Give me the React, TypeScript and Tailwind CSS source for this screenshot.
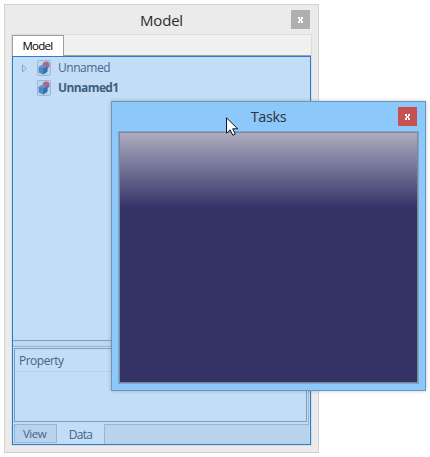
import React from "react";

function CloseButton({ className }: { className: string }) {
  return (
    <button className={`flex h-[19px] w-[19px] shrink-0 items-center justify-center ${className}`} aria-label="Close">
      <svg width="5" height="6" viewBox="0 0 5 6" fill="white" shapeRendering="crispEdges">
        <path d="M0 0h2v1H0zM3 0h2v1H3zM0 1h2v1H0zM3 1h2v1H3zM1 2h3v2H1zM0 4h2v2H0zM3 4h2v2H3z" />
      </svg>
    </button>
  );
}

function DocumentIcon() {
  return (
    <svg width="14" height="16" viewBox="0 0 14 16" className="shrink-0">
      <rect x="0.5" y="0.5" width="13" height="15" rx="0.8" fill="#b9d5f0" stroke="#9bb7d6" />
      <circle cx="9.2" cy="5" r="3.4" fill="#b56480" />
      <path d="M1.6 7 5.5 4.8 10.4 6.3v5.5l-4.2 2.7L1.6 12.4z" fill="#5088c4" />
      <path d="M1.6 7 5.5 4.8 10.4 6.3 6.4 8.5z" fill="#6094cc" />
      <path d="M6.4 8.5 10.4 6.3v5.5l-4.2 2.7z" fill="#3c70aa" />
    </svg>
  );
}

function TreeItem({ label, expandable, bold }: { label: string; expandable?: boolean; bold?: boolean }) {
  return (
    <div className="flex h-5 items-center pl-[8px]">
      <div className="w-4 shrink-0">
        {expandable && (
          <svg width="7" height="9" viewBox="0 0 7 9" fill="none" stroke="#88a7ca">
            <path d="M1.5 1v7L5.5 4.5z" />
          </svg>
        )}
      </div>
      <DocumentIcon />
      <span className={`ml-[7px] text-[12px] leading-5 ${bold ? "font-bold tracking-[-0.6px] text-[#405f7e]" : "tracking-[-0.45px] text-[#49698d]"}`}>{label}</span>
    </div>
  );
}

function PropertyPanel() {
  return (
    <div className="flex h-[98px] flex-col">
      <div className="mr-px flex h-[79px] shrink-0 flex-col border-t border-r border-[#9ab4d0] pt-px pr-px pb-[3px] pl-px">
        <div className="flex-1 border border-[#809fbf]">
          <div className="h-[23px] border-b border-[#b8d2eb] pl-1 text-[12px] leading-6 tracking-[-0.5px] text-[#456488]">Property</div>
        </div>
      </div>
      <div className="-mt-px flex h-5 pl-px text-[#456488]">
        <div className="h-[19px] w-[43px] border border-[#9ab4d0] bg-[#b9d3ec] pr-[2px] text-center text-[11.5px] leading-[18px] tracking-[-0.5px]">View</div>
        <div className="w-[47px] text-center text-[12px] leading-[22px] tracking-[-0.7px]">Data</div>
        <div className="mr-px flex-1 border-t border-l border-[#9ab4d0] bg-[#b9d3ec]" />
      </div>
    </div>
  );
}

function ModelWindow() {
  return (
    <section className="absolute top-1 left-1 flex h-[449px] w-[315px] flex-col border border-[#d0d0d0] bg-[#ebebeb] px-[6px] pb-[6px]">
      <header className="relative flex h-[29px] shrink-0 justify-end pt-[5px] pr-[2px]">
        <h1 className="absolute inset-x-0 top-[3px] text-center text-[15px] leading-6 tracking-[-0.2px] text-[#2b2b2b]">Model</h1>
        <CloseButton className="bg-[#afafaf]" />
      </header>
      <div className="flex flex-1 flex-col border border-[#dcdcdc] bg-[#f0f0f0]">
        <div className="flex h-[21px] shrink-0 border-b border-[#a0a0a0]">
          <div className="h-[21px] w-[52px] border border-b-0 border-[#a0a0a0] bg-white pr-px text-center text-[11.5px] leading-5 tracking-[-0.75px] text-black">Model</div>
        </div>
        <div className="flex flex-1 flex-col border border-[#2580d5] bg-[#c3ddf6]">
          <div className="flex-1 pt-px">
            <TreeItem label="Unnamed" expandable />
            <TreeItem label="Unnamed1" bold />
          </div>
          <div className="h-[6px] shrink-0 border-t border-[#809fbf] bg-[#bed8f1]" />
          <PropertyPanel />
        </div>
      </div>
    </section>
  );
}

function TasksWindow() {
  return (
    <section className="absolute top-[101px] left-[111px] flex h-[290px] w-[315px] flex-col border border-[#6897c2] bg-[#8dc8fa] px-[6px] pb-[6px] shadow-[0_0_4px_rgba(0,0,0,0.22)]">
      <header className="relative flex h-[29px] shrink-0 justify-end pt-[5px] pr-[2px]">
        <h2 className="absolute inset-x-0 top-[3px] text-center text-[14.5px] leading-6 tracking-[-0.35px] text-[#303438]">Tasks</h2>
        <CloseButton className="bg-[#c75050]" />
      </header>
      <div className="flex flex-1 border border-[#76a8d2]">
        <div className="flex-1 border border-[#838795] bg-[linear-gradient(to_bottom,#adacc0_0px,#333366_75px)]" />
      </div>
    </section>
  );
}

function Cursor() {
  return (
    <svg width="13" height="20" viewBox="0 0 13 20" className="absolute top-[117px] left-[226px]">
      <path d="M.5.8v15.4l3.6-3.4 2.7 5.4 2.5-1.2-2.6-5.2h5z" fill="white" stroke="#101428" />
    </svg>
  );
}

export default function App() {
  return (
    <main className="relative h-[457px] w-[430px] overflow-hidden bg-white font-['Open_Sans','Noto_Sans',sans-serif]">
      <ModelWindow />
      <TasksWindow />
      <Cursor />
    </main>
  );
}
